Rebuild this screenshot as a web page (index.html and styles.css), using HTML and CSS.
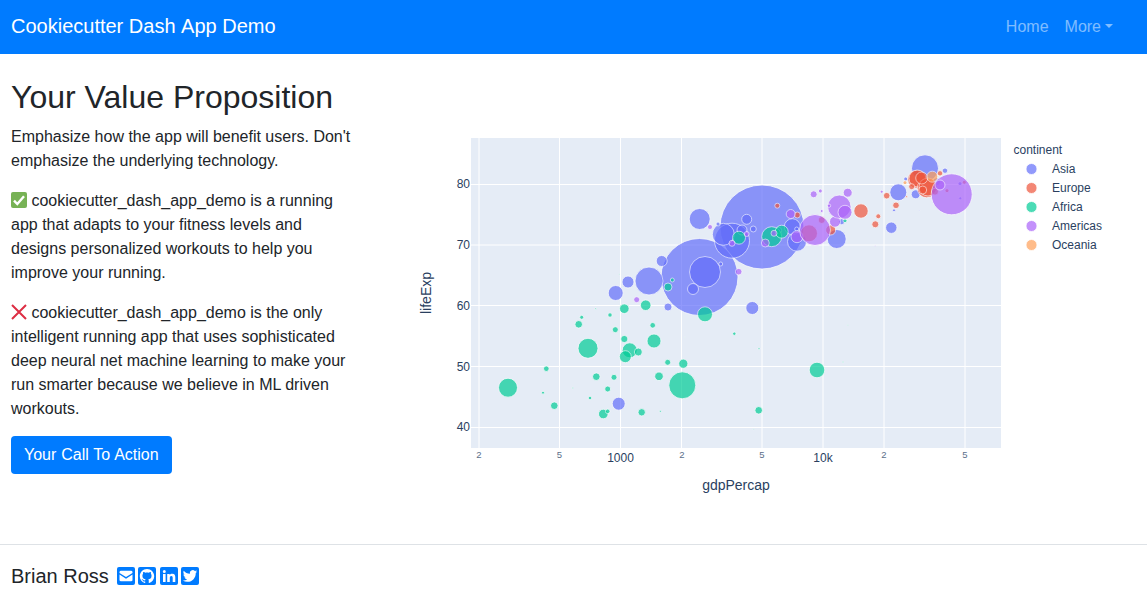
FILE: index.html
```html
<!DOCTYPE html>
<html lang="en">
<head>
    <meta charset="UTF-8">
    <meta name="viewport" content="width=device-width, initial-scale=1.0">
    <title>Cookiecutter Dash App Demo</title>
    <link rel="stylesheet" href="styles.css">
</head>
<body>
    <nav class="navbar">
        <a class="brand" href="#">Cookiecutter Dash App Demo</a>
        <div class="nav-links">
            <a class="nav-link" href="#">Home</a>
            <a class="nav-link" href="#">More<span class="caret"></span></a>
        </div>
    </nav>

    <main class="content">
        <section class="pitch">
            <h1>Your Value Proposition</h1>
            <p>Emphasize how the app will benefit users. Don't emphasize the underlying technology.</p>
            <p>
                <svg class="mark" viewBox="0 0 16 16"><rect width="16" height="16" rx="2" fill="#77b255"/><path d="M3 8.6 6.3 12 13 4.2" fill="none" stroke="#fff" stroke-width="2.4"/></svg>
                cookiecutter_dash_app_demo is a running app that adapts to your fitness levels and designs personalized workouts to help you improve your running.
            </p>
            <p>
                <svg class="mark" viewBox="0 0 16 16"><path d="M1 1 15 15M15 1 1 15" fill="none" stroke="#dd2e44" stroke-width="2"/></svg>
                cookiecutter_dash_app_demo is the only intelligent running app that uses sophisticated deep neural net machine learning to make your run smarter because we believe in ML driven workouts.
            </p>
            <a class="btn" href="#">Your Call To Action</a>
        </section>

        <section class="chart">
            <svg id="plot" viewBox="382 128 765 370" width="765" height="370">
                <rect class="plot-bg" x="471" y="138" width="530" height="310"/>
                <g id="grid"></g>
                <g id="bubbles"></g>
                <g class="tick">
                    <text x="470" y="188">80</text>
                    <text x="470" y="249">70</text>
                    <text x="470" y="310">60</text>
                    <text x="470" y="371">50</text>
                    <text x="470" y="431">40</text>
                </g>
                <g class="xtick">
                    <text x="620.5" y="461.5">1000</text>
                    <text x="823" y="461.5">10k</text>
                </g>
                <g class="xminor">
                    <text x="479" y="458">2</text>
                    <text x="559.5" y="458">5</text>
                    <text x="682" y="458">2</text>
                    <text x="762" y="458">5</text>
                    <text x="884" y="458">2</text>
                    <text x="965" y="458">5</text>
                </g>
                <text class="axis-title" x="736" y="490">gdpPercap</text>
                <text class="axis-title" transform="translate(431 293) rotate(-90)">lifeExp</text>
                <g id="legend">
                    <text class="legend-text" x="1013.5" y="154">continent</text>
                </g>
            </svg>
        </section>
    </main>

    <footer class="footer">
        <span class="name">Brian Ross</span>
        <div class="socials">
            <svg class="social" viewBox="0 0 18 18"><rect width="18" height="18" rx="2"/><path class="glyph" d="M2.5 5.2Q2.5 3.8 4 3.8H14Q15.5 3.8 15.5 5.2V5.9L9 10 2.5 5.9ZM2.5 7.6 9 11.7 15.5 7.6V13Q15.5 14.3 14 14.3H4Q2.5 14.3 2.5 13Z"/></svg>
            <svg class="social" viewBox="0 0 18 18"><rect width="18" height="18" rx="2"/><path class="glyph" transform="translate(1.8 1.8) scale(.6)" d="M12 .297c-6.63 0-12 5.373-12 12 0 5.303 3.438 9.8 8.205 11.385.6.113.82-.258.82-.577 0-.285-.01-1.04-.015-2.04-3.338.724-4.042-1.61-4.042-1.61C4.422 18.07 3.633 17.7 3.633 17.7c-1.087-.744.084-.729.084-.729 1.205.084 1.838 1.236 1.838 1.236 1.07 1.835 2.809 1.305 3.495.998.108-.776.417-1.305.76-1.605-2.665-.3-5.466-1.332-5.466-5.93 0-1.31.465-2.38 1.235-3.22-.135-.303-.54-1.523.105-3.176 0 0 1.005-.322 3.3 1.23.96-.267 1.98-.399 3-.405 1.02.006 2.04.138 3 .405 2.28-1.552 3.285-1.23 3.285-1.23.645 1.653.24 2.873.12 3.176.765.84 1.23 1.91 1.23 3.22 0 4.61-2.805 5.625-5.475 5.92.42.36.81 1.096.81 2.22 0 1.606-.015 2.896-.015 3.286 0 .315.21.69.825.57C20.565 22.092 24 17.592 24 12.297c0-6.627-5.373-12-12-12"/></svg>
            <svg class="social" viewBox="0 0 18 18"><rect width="18" height="18" rx="2"/><path class="glyph" d="M3 7h2.6v8H3ZM4.3 3A1.5 1.5 0 1 1 4.3 6 1.5 1.5 0 0 1 4.3 3ZM7.2 7h2.5v1.1C10.2 7.3 11.1 6.8 12.3 6.8 14.8 6.8 15.3 8.4 15.3 10.5V15H12.7V11C12.7 10 12.6 9 11.4 9 10.2 9 9.8 9.9 9.8 11V15H7.2Z"/></svg>
            <svg class="social" viewBox="0 0 18 18"><rect width="18" height="18" rx="2"/><path class="glyph" transform="translate(1.8 1.8) scale(.6)" d="M23.953 4.57a10 10 0 01-2.825.775 4.958 4.958 0 002.163-2.723c-.951.555-2.005.959-3.127 1.184a4.92 4.92 0 00-8.384 4.482C7.69 8.095 4.067 6.13 1.64 3.162a4.822 4.822 0 00-.666 2.475c0 1.71.87 3.213 2.188 4.096a4.904 4.904 0 01-2.228-.616v.06a4.923 4.923 0 003.946 4.827 4.996 4.996 0 01-2.212.085 4.936 4.936 0 004.604 3.417 9.867 9.867 0 01-6.102 2.105c-.39 0-.779-.023-1.17-.067a13.995 13.995 0 007.557 2.209c9.053 0 13.998-7.496 13.998-13.985 0-.21 0-.42-.015-.63A9.935 9.935 0 0024 4.59z"/></svg>
        </div>
    </footer>

    <script src="chart.js"></script>
</body>
</html>
```

FILE: styles.css
```css
* {
    box-sizing: border-box;
}
body {
    margin: 0;
    font-family: "Liberation Sans", Arial, sans-serif;
    font-size: 16px;
    line-height: 24px;
    color: #212529;
    background: #fff;
    overflow: hidden;
}
a {
    text-decoration: none;
}
.navbar {
    display: flex;
    align-items: center;
    justify-content: space-between;
    height: 54px;
    padding: 0 26px 0 11px;
    background: #007bff;
}
.brand {
    padding-bottom: 2px;
    font-size: 20px;
    font-kerning: none;
    color: #fff;
}
.nav-links {
    display: flex;
}
.nav-link {
    padding: 0 8px;
    color: rgba(255, 255, 255, 0.5);
}
.caret {
    display: inline-block;
    margin-left: 4px;
    vertical-align: 4px;
    border-top: 4px solid;
    border-left: 4px solid transparent;
    border-right: 4px solid transparent;
}
.content {
    display: flex;
    height: 490px;
}
.pitch {
    flex: none;
    width: 382px;
    padding: 24px 30px 0 11px;
}
h1 {
    margin: 0 0 9px;
    font-size: 32px;
    font-weight: 400;
    line-height: 38px;
}
p {
    margin: 0 0 16px;
}
.mark {
    width: 16px;
    height: 16px;
    vertical-align: -2px;
}
.btn {
    display: block;
    width: fit-content;
    margin-top: -1px;
    padding: 7px 13px;
    border-radius: 4px;
    background: #007bff;
    word-spacing: 0.4px;
    color: #fff;
}
.chart {
    flex: 1;
    padding-top: 74px;
}
#plot {
    display: block;
    font-family: "Liberation Sans", Arial, sans-serif;
}
.plot-bg {
    fill: #e5ecf6;
}
.grid-line {
    stroke: #fff;
    stroke-width: 1;
}
.bubble {
    stroke: #fff;
    stroke-width: 0.8;
    opacity: 0.7;
}
.tick text {
    font-size: 12px;
    fill: #2a3f5f;
    text-anchor: end;
}
.xtick text {
    font-size: 12px;
    fill: #2a3f5f;
    text-anchor: middle;
}
.xminor text {
    font-size: 9.5px;
    fill: #5d6f8a;
    text-anchor: middle;
}
.axis-title {
    font-size: 14px;
    fill: #2a3f5f;
    text-anchor: middle;
}
.legend-text {
    font-size: 12px;
    fill: #2a3f5f;
}
.footer {
    display: flex;
    align-items: center;
    height: 46px;
    padding: 17px 11px 0;
    border-top: 1px solid #dee2e6;
}
.name {
    font-size: 20px;
}
.socials {
    display: flex;
    gap: 3.5px;
    margin-left: 8px;
}
.social {
    width: 18px;
    height: 18px;
    fill: #007bff;
}
.social .glyph {
    fill: #fff;
}
```

FILE: chart.js
```js
const NS = 'http://www.w3.org/2000/svg';
const COLORS = {
    Asia: '#636efa',
    Europe: '#ef553b',
    Africa: '#00cc96',
    Americas: '#ab63fa',
    Oceania: '#ffa15a'
};

// x, y, radius in page pixels, read off the reference plot
const DATA = {
    Asia: [
        [762,227,42],[699.5,277,38.5],[705,272,15.5],[649,281,14],[732,240.7,17.5],[723.3,234.3,11],
        [699.7,219,10.5],[693,289,5.5],[661.7,261,5.5],[628,282,6],[615.7,293,7.5],[720.7,264,2],
        [668,307,4],[752.3,308,6.5],[718,224,2],[742,230,5],[746.7,219.3,5],[753.3,229,3],[618.7,403.7,6.5],
        [778.7,230.3,3],[792.3,226.7,8],[797,241.7,9.5],[796.7,229,2],[836.7,239,9.5],[841.7,221.7,3],
        [891.3,227.7,5.7],[898.3,192.3,8.5],[894,210.3,1.5],[919.3,210.3,.5],[925,168.3,13.5],
        [945,170.7,2.7],[905.7,179,2],[915.7,194.3,4.5],[960,183.7,2],[960.3,198.3,1.5],[936.7,181.7,4]
    ],
    Europe: [
        [861,211,7.2],[878.3,216.3,2.5],[875.3,224.3,3.5],[886.7,195.7,3.3],[896,205.3,3.3],[906.7,196.7,1],
        [809,233.3,8.5],[821.7,220,3.5],
        [916.7,179.3,9],[917.5,178.5,8.5],[926.7,188.3,9.5],[928,187,9],[921.7,178,6],[940,173.3,2.7],[911.7,186.7,3],[922.7,190,4],
        [935,191.7,3.5],[964.3,182.3,2],[947,190.7,2],[830.7,230,5],[777.3,205.7,2.5],[797.3,215,3]
    ],
    Africa: [
        [508,387.7,9.5],[546.3,368.7,2.8],[543,392.7,1.5],[554.3,405.7,3.8],[572.7,388,.7],[590,398,1.8],
        [603.3,414,4.8],[607.7,411.3,2.3],[607.7,389,3],[596.3,376.7,3.8],[614,377.3,3],[588,348.3,10],
        [578.7,324.3,3.8],[581.7,317.3,2],[595.7,308.7,.8],[610,315,2.2],[615.3,329.7,3],[624.3,339,3.6],
        [624.3,308.7,4.8],[645.7,305.2,5.3],[652.7,325.3,2.8],[654,341,7],[629.7,350.3,7.5],[625.3,356.7,6],
        [638.3,352,4],[667.7,362.3,3],[683.3,363.7,4.6],[659,376.3,4.3],[682.3,385.3,13.5],[641.7,412.3,3.7],
        [660.3,411.3,1],[685,337.3,.4],[734.3,333.7,1.7],[759,348.7,1],[758.7,410.3,3.8],[753.7,429.3,.5],
        [619.3,274.3,.5],[817,370,7.8],[847.7,325,.5],[843,362,.8],[705,314.3,7.5],[668,287,4],[672.3,280,2],
        [739,237.7,6.5],[771.7,236.7,10],[781.7,231.7,6.5],[845,220.7,2],[799,206,.5]
    ],
    Americas: [
        [636.7,299.7,3],[738.7,271.7,3.3],[710,227,2.5],[746.7,234,2.5],[732,243.3,3],[765.3,243,4],[774,233.3,3],
        [790.7,214,4.5],[797,236.7,6],[815,230,15.5],[835,221.7,5.5],
        [839.3,206.7,11.7],[845,212.3,7],[829,205.7,1.7],[821.7,211,1.5],[813.7,194.3,3.5],[820.3,191,2],
        [847.7,192.7,4.5],[881.7,191.7,1.5],[875.3,245.7,.5],[951.7,194.3,20.5],[940,185,5]
    ],
    Oceania: [
        [932.3,176.7,5.5],[905,182.7,2]
    ]
};

function make(parent, tag, attrs) {
    const el = document.createElementNS(NS, tag);
    for (const key in attrs) el.setAttribute(key, attrs[key]);
    parent.appendChild(el);
    return el;
}

const grid = document.getElementById('grid');
[479, 559.5, 620.5, 681.5, 762, 823, 884, 965].forEach(x => {
    make(grid, 'line', { class: 'grid-line', x1: x, x2: x, y1: 138, y2: 448 });
});
[184.5, 245, 305.5, 366.5, 427.5].forEach(y => {
    make(grid, 'line', { class: 'grid-line', x1: 471, x2: 1001, y1: y, y2: y });
});

const bubbles = document.getElementById('bubbles');
const legend = document.getElementById('legend');
Object.keys(DATA).forEach((name, i) => {
    DATA[name].forEach(([cx, cy, r]) => {
        make(bubbles, 'circle', { class: 'bubble', cx, cy, r, fill: COLORS[name] });
    });
    const y = 169 + i * 19;
    make(legend, 'circle', { class: 'bubble', cx: 1031.5, cy: y, r: 5.5, fill: COLORS[name] });
    const label = make(legend, 'text', { class: 'legend-text', x: 1052, y: y + 4 });
    label.textContent = name;
});
```
